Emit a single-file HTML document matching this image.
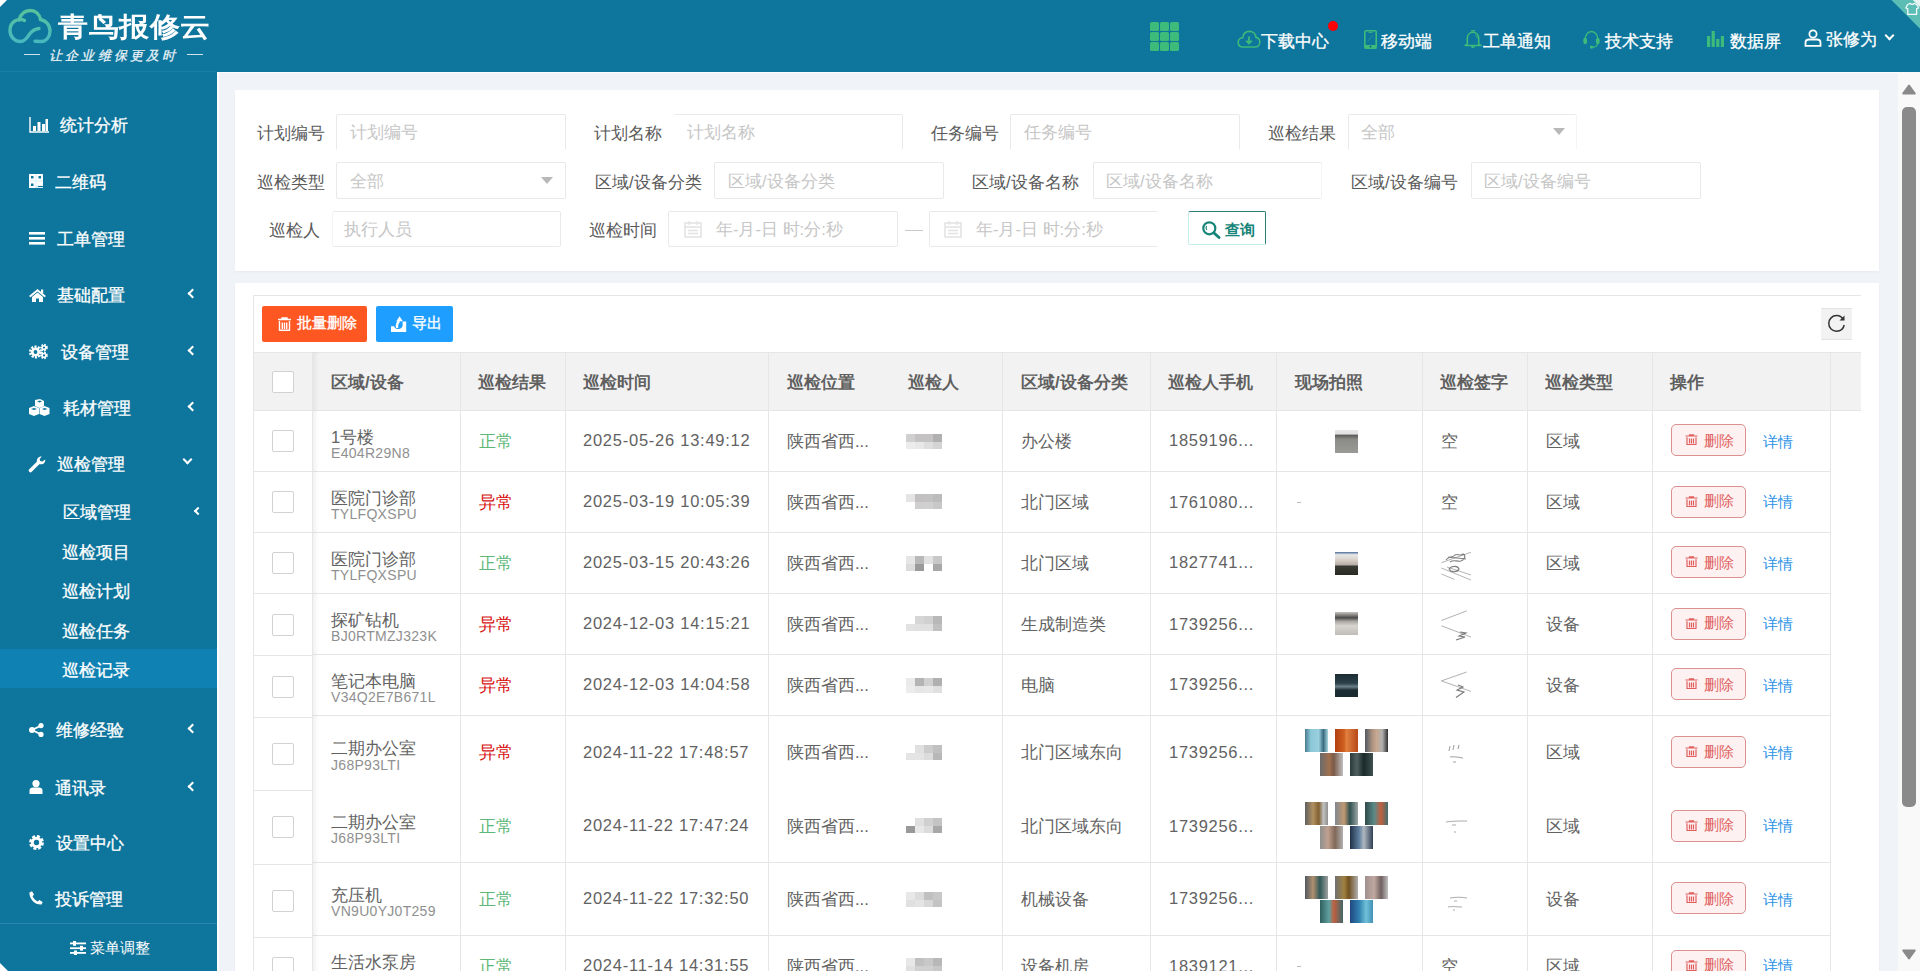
<!DOCTYPE html><html><head><meta charset="utf-8"><title>巡检记录</title><style>
*{margin:0;padding:0;box-sizing:border-box}
html,body{width:1920px;height:971px;overflow:hidden}
body{position:relative;background:#f0f3f8;font-family:"Liberation Sans",sans-serif;color:#666}
.a{position:absolute}
.t{position:absolute;white-space:nowrap;line-height:1}
svg{position:absolute;overflow:visible}
#hdr{left:0;top:0;width:1920px;height:72px;background:#0e759c}
#side{left:0;top:72px;width:217px;height:899px;background:#0e759c}
.nav{color:#fff;font-size:17px;-webkit-text-stroke:0.3px #fff}
.sm{color:#fff;font-size:17px;-webkit-text-stroke:0.3px #fff}
.chev{position:absolute;width:7px;height:7px;border-left:2px solid #fff;border-bottom:2px solid #fff}
.card{position:absolute;background:#fff;box-shadow:0 1px 2px rgba(0,0,0,.04)}
.lbl{font-size:16.5px;color:#5a5a5a}
.inp{position:absolute;border:1px solid #e9e9e9;border-radius:2px;background:#fff}
.ph{font-size:16.5px;color:#c6c6c6}
.th{font-size:16.5px;color:#5f5f5f;font-weight:bold}
.td{font-size:16.5px;color:#626262}
.code{font-size:14px;color:#909090;letter-spacing:0.3px}
.ok{color:#5fb878}
.bad{color:#d70f0f}
.vl{position:absolute;width:1px;background:#e6e6e6}
.hl{position:absolute;height:1px;background:#e6e6e6}
.cb{position:absolute;width:22px;height:22px;border:1px solid #d2d2d2;border-radius:2px;background:#fff}
.del{position:absolute;width:75px;height:32px;border:1px solid #dc9090;border-radius:5px;background:#fdf1f1}
.delt{font-size:14.5px;color:#e06060}
.det{font-size:15px;color:#2a92e6}
.thumb{position:absolute;width:23px;height:23px}
</style></head><body>
<div id="hdr" class="a"></div>
<div id="side" class="a"></div>
<div class="a" style="left:0;top:71px;width:217px;height:1px;background:#1b7ea6"></div>
<div class="a" style="left:217px;top:72px;width:1681px;height:899px;border-left:2px solid #fbfdff;border-top:1px solid #fbfdff"></div>
<div class="a" style="left:0;top:0;width:0;height:0;border-top:7px solid #fff;border-right:7px solid transparent"></div>
<svg style="left:4px;top:4px" width="52" height="44" viewBox="0 0 52 44">
<defs><linearGradient id="cg" x1="0" y1="0" x2="0" y2="1"><stop offset="0" stop-color="#58c39c"/><stop offset="1" stop-color="#48b8bf"/></linearGradient></defs>
<path d="M20.5 16.5 C15 13.5 6 17 6 26.5 C6 33 11 37.5 16.5 37.5 C22 37.5 24 32 26 29.5 C28 27 31 25 35 24.5 M15 16 C17 9 21.5 6.5 26.5 6.5 C31.5 6.5 35.5 10 36.5 15.5 C42 16.5 46 21 46 27 C46 33 42 37.5 37.5 37.5 L31 37.2" fill="none" stroke="url(#cg)" stroke-width="3.4" stroke-linecap="round"/>
</svg>
<div class="t" style="left:58px;top:12.5px;font-size:30px;color:#fff;font-weight:bold;transform:scaleY(0.9);transform-origin:0 0;letter-spacing:0.6px">青鸟报修云</div>
<div class="a" style="left:24px;top:54px;width:16px;height:1px;background:#cfe3ee"></div>
<div class="a" style="left:187px;top:54px;width:16px;height:1px;background:#cfe3ee"></div>
<div class="t" style="left:49px;top:48.5px;font-size:13px;color:#e8f2f7;letter-spacing:3.2px;-webkit-text-stroke:0.3px #e8f2f7;font-family:'Liberation Serif',serif;font-style:italic">让企业维保更及时</div>
<svg style="left:1150px;top:22px" width="29" height="29"><rect x="0" y="0" width="9" height="9" rx="1.5" fill="#3dbb7a"/><rect x="10" y="0" width="9" height="9" rx="1.5" fill="#3dbb7a"/><rect x="20" y="0" width="9" height="9" rx="1.5" fill="#3dbb7a"/><rect x="0" y="10" width="9" height="9" rx="1.5" fill="#3dbb7a"/><rect x="10" y="10" width="9" height="9" rx="1.5" fill="#3dbb7a"/><rect x="20" y="10" width="9" height="9" rx="1.5" fill="#3dbb7a"/><rect x="0" y="20" width="9" height="9" rx="1.5" fill="#3dbb7a"/><rect x="10" y="20" width="9" height="9" rx="1.5" fill="#3dbb7a"/><rect x="20" y="20" width="9" height="9" rx="1.5" fill="#3dbb7a"/></svg>
<svg style="left:1237px;top:30px" width="24" height="19" viewBox="0 0 24 19">
<path d="M6 17 C3 17 1.2 15 1.2 12.3 C1.2 9.6 3.2 7.8 5.6 7.8 C6.2 3.9 8.8 1.4 12.4 1.4 C16 1.4 18.6 4 19 7.4 C21.3 7.8 22.8 9.7 22.8 12.2 C22.8 15 20.8 17 18 17 Z" fill="none" stroke="#3dbb7a" stroke-width="1.6"/>
<path d="M12 6.5 V13.2 M9.2 10.6 L12 13.4 L14.8 10.6" fill="none" stroke="#3dbb7a" stroke-width="1.8"/>
</svg>
<div class="t nav" style="left:1261px;top:33px">下载中心</div>
<div class="a" style="left:1328px;top:21px;width:10px;height:10px;border-radius:50%;background:#f00"></div>
<svg style="left:1364px;top:30px" width="13" height="19" viewBox="0 0 13 19">
<path d="M2 0.8 H11 C11.7 0.8 12.2 1.3 12.2 2 V17 C12.2 17.7 11.7 18.2 11 18.2 H2 C1.3 18.2 0.8 17.7 0.8 17 V2 C0.8 1.3 1.3 0.8 2 0.8 Z" fill="none" stroke="#3dbb7a" stroke-width="1.6"/>
<rect x="0.8" y="15" width="11.4" height="3.2" fill="#3dbb7a"/>
<circle cx="6.5" cy="16.6" r="0.9" fill="#0e5a70"/>
<path d="M4.5 2.3 H8.5" stroke="#3dbb7a" stroke-width="1"/>
<path d="M4 11 L9 5" stroke="#3dbb7a" stroke-width="0.8" opacity=".55"/>
</svg>
<div class="t nav" style="left:1381px;top:33px">移动端</div>
<svg style="left:1464px;top:30px" width="18" height="18" viewBox="0 0 18 18">
<path d="M7 0.8 H11" stroke="#3dbb7a" stroke-width="1.4"/>
<path d="M3.3 14.5 V8.5 C3.3 4.8 5.8 2.2 9 2.2 C12.2 2.2 14.7 4.8 14.7 8.5 V14.5 C15.5 14.8 16.5 15 17 15.5 H1 C1.5 15 2.5 14.8 3.3 14.5 Z" fill="none" stroke="#3dbb7a" stroke-width="1.6" stroke-linejoin="round"/>
<path d="M11 4.5 C12.5 5.3 13.2 6.8 13.2 8.3" fill="none" stroke="#3dbb7a" stroke-width="1"/>
<path d="M7.3 16.3 C7.6 17.6 10.4 17.6 10.7 16.3" fill="#3dbb7a" stroke="#3dbb7a" stroke-width="1.2"/>
</svg>
<div class="t nav" style="left:1483px;top:33px">工单通知</div>
<svg style="left:1583px;top:29.5px" width="17" height="19" viewBox="0 0 17 19">
<path d="M2 10 C2 5 5 1.5 8.5 1.5 C12 1.5 15 5 15 10" fill="none" stroke="#3dbb7a" stroke-width="1.4"/>
<ellipse cx="2.2" cy="11" rx="1.9" ry="3.2" fill="#3dbb7a"/><ellipse cx="14.8" cy="11" rx="1.9" ry="3.2" fill="#3dbb7a"/>
<path d="M14.8 13 C14.5 16 12 17.3 9 17.3" fill="none" stroke="#3dbb7a" stroke-width="1.2"/>
<circle cx="8.6" cy="17.1" r="1.7" fill="#3dbb7a"/>
</svg>
<div class="t nav" style="left:1605px;top:33px">技术支持</div>
<svg style="left:1707px;top:31px" width="18" height="17" viewBox="0 0 18 17">
<rect x="0" y="5" width="3.2" height="11" fill="#3dbb7a"/><rect x="4.6" y="0" width="3.2" height="16" fill="#3dbb7a"/><rect x="9.2" y="8" width="3.2" height="8" fill="#3dbb7a"/><rect x="13.8" y="5" width="3.2" height="11" fill="#3dbb7a"/>
</svg>
<div class="t nav" style="left:1730px;top:33px">数据屏</div>
<svg style="left:1804px;top:29px" width="18" height="18" viewBox="0 0 18 18">
<circle cx="9" cy="5" r="3.6" fill="none" stroke="#fff" stroke-width="1.8"/>
<path d="M1.5 16.8 V13.5 C1.5 11.5 3 10.5 5 10.5 H13 C15 10.5 16.5 11.5 16.5 13.5 V16.8 Z" fill="none" stroke="#fff" stroke-width="1.8"/>
</svg>
<div class="t nav" style="left:1826px;top:30.5px">张修为</div>
<div class="chev" style="left:1886px;top:32px;transform:rotate(-45deg);width:7px;height:7px"></div>
<svg style="left:1878px;top:0" width="42" height="42" viewBox="0 0 42 42">
<path d="M13.4 0 H42 V28.8 Z" fill="#5bbdb4"/>
<path d="M34.8 0 H42 V7 Z" fill="#e6f4f2"/>
<path d="M29.5 4.8 L32.2 3.3 C33.2 4.6 35.2 4.6 36.2 3.3 L38.9 4.8 L40.5 7.8 L38.6 8.8 V14.4 H29.8 V8.8 L27.9 7.8 Z" fill="none" stroke="#f4fbfb" stroke-width="1.3" stroke-linejoin="round"/>
</svg>
<div class="a" style="left:0;top:649px;width:217px;height:39px;background:#0f82b3"></div>
<svg style="left:29px;top:117px" width="21" height="16" viewBox="0 0 21 16"><path d="M1 0 V15 H20" fill="none" stroke="#fff" stroke-width="1.4"/><rect x="4" y="9" width="3" height="5" fill="#fff"/><rect x="8.5" y="5" width="3" height="9" fill="#fff"/><rect x="13" y="7" width="3" height="7" fill="#fff"/><rect x="16.5" y="2" width="2.5" height="12" fill="#fff"/></svg>
<div class="t sm" style="left:60px;top:117px">统计分析</div>
<svg style="left:29px;top:174px" width="14" height="14" viewBox="0 0 14 14"><rect width="14" height="14" fill="#d8eef6"/><path d="M0 0h6.5v6.5h-6.5z M7.5 0h6.5v6.5h-6.5z M0 7.5h6.5v6.5h-6.5z M7.5 7.5h6.5v4h-6.5z" fill="#fff"/><path d="M2 2h2.5v2.5h-2.5z M9.5 2h2.5v2.5h-2.5z M2 9.5h2.5v2.5h-2.5z M9 12h5v1h-5z" fill="#0e759c"/></svg>
<div class="t sm" style="left:55px;top:174px">二维码</div>
<svg style="left:29px;top:232px" width="16" height="13" viewBox="0 0 16 13"><rect y="0" width="16" height="2.6" fill="#fff"/><rect y="5" width="16" height="2.6" fill="#fff"/><rect y="10" width="16" height="2.6" fill="#fff"/></svg>
<div class="t sm" style="left:57px;top:231px">工单管理</div>
<svg style="left:29px;top:289px" width="17" height="13" viewBox="0 0 17 13"><path d="M8.5 0 L17 7 L15.5 8.3 L8.5 2.6 L1.5 8.3 L0 7 Z" fill="#fff"/><path d="M3 8 L8.5 3.6 L14 8 V13 H10 V9.5 H7 V13 H3 Z" fill="#fff"/><rect x="12" y="0.5" width="2.2" height="4" fill="#fff"/></svg>
<div class="t sm" style="left:57px;top:287px">基础配置</div>
<div class="chev" style="left:189px;top:290px;transform:rotate(45deg);width:7px;height:7px"></div>
<svg style="left:29px;top:344px" width="19" height="15" viewBox="0 0 19 15"><circle cx="6.5" cy="8" r="5.2" fill="none" stroke="#fff" stroke-width="2.6" stroke-dasharray="2 1.27"/><circle cx="6.5" cy="8" r="3.2" fill="none" stroke="#fff" stroke-width="2.6"/><circle cx="15" cy="3.6" r="2.8" fill="none" stroke="#fff" stroke-width="2" stroke-dasharray="1.5 1.1"/><circle cx="15" cy="3.6" r="1.9" fill="none" stroke="#fff" stroke-width="1.6"/><circle cx="15" cy="11.4" r="2.8" fill="none" stroke="#fff" stroke-width="2" stroke-dasharray="1.5 1.1"/><circle cx="15" cy="11.4" r="1.9" fill="none" stroke="#fff" stroke-width="1.6"/></svg>
<div class="t sm" style="left:61px;top:344px">设备管理</div>
<div class="chev" style="left:189px;top:347px;transform:rotate(45deg);width:7px;height:7px"></div>
<svg style="left:29px;top:399px" width="21" height="17" viewBox="0 0 21 17"><path d="M6 1 L11 0 L15 2 V7 L10.5 9 L6 7 Z" fill="#fff"/><path d="M0 9 L5 7 L10 9 V15 L5 17 L0 15 Z" fill="#fff"/><path d="M10.5 9 L15.5 7 L20.5 9 V15 L15.5 17 L10.5 15 Z" fill="#fff"/><path d="M2 10 L5 9 L8 10 L5 11 Z M13 10 L15.5 9 L18.5 10 L15.5 11 Z M8 2.5 L11 1.5 L13 2.5 L10.5 3.5 Z" fill="#0e759c"/></svg>
<div class="t sm" style="left:63px;top:400px">耗材管理</div>
<div class="chev" style="left:189px;top:403px;transform:rotate(45deg);width:7px;height:7px"></div>
<svg style="left:29px;top:456px" width="17" height="16" viewBox="0 0 17 16"><path d="M1.5 14.5 L9 7" stroke="#fff" stroke-width="3.6" stroke-linecap="round"/><path d="M8 6 C7.3 3 9.5 0.3 12.8 0.6 L10.6 3 L11.2 5 L13.4 5.6 L16.2 3.4 C16.6 6.8 13.8 9 10.8 8.2 Z" fill="#fff"/></svg>
<div class="t sm" style="left:57px;top:456px">巡检管理</div>
<div class="chev" style="left:184px;top:456px;transform:rotate(-45deg);width:7px;height:7px"></div>
<svg style="left:29px;top:723px" width="15" height="14" viewBox="0 0 15 14"><circle cx="12" cy="2.6" r="2.6" fill="#fff"/><circle cx="3" cy="7" r="3" fill="#fff"/><circle cx="12" cy="11.4" r="2.6" fill="#fff"/><path d="M3 7 L12 2.6 M3 7 L12 11.4" stroke="#fff" stroke-width="1.8"/></svg>
<div class="t sm" style="left:56px;top:722px">维修经验</div>
<div class="chev" style="left:189px;top:725px;transform:rotate(45deg);width:7px;height:7px"></div>
<svg style="left:29px;top:780px" width="14" height="14" viewBox="0 0 14 14"><circle cx="7" cy="3.6" r="3.6" fill="#fff"/><path d="M0.5 14 V10.5 C0.5 8.7 2 7.6 4 7.6 H10 C12 7.6 13.5 8.7 13.5 10.5 V14 Z" fill="#fff"/></svg>
<div class="t sm" style="left:55px;top:780px">通讯录</div>
<div class="chev" style="left:189px;top:783px;transform:rotate(45deg);width:7px;height:7px"></div>
<svg style="left:29px;top:835px" width="15" height="15" viewBox="0 0 15 15"><circle cx="7.5" cy="7.5" r="5.4" fill="none" stroke="#fff" stroke-width="4" stroke-dasharray="2.6 1.6"/><circle cx="7.5" cy="7.5" r="4.2" fill="none" stroke="#fff" stroke-width="3"/></svg>
<div class="t sm" style="left:56px;top:835px">设置中心</div>
<svg style="left:29px;top:891px" width="14" height="14" viewBox="0 0 14 14"><path d="M3 0.3 L5 3.5 L3.6 5.2 C4.4 7.2 6.5 9.4 8.6 10.4 L10.3 9 L13.7 11 L12.6 13.5 C6 14 0.2 8 0.4 1.4 Z" fill="#fff"/></svg>
<div class="t sm" style="left:55px;top:891px">投诉管理</div>
<div class="t sm" style="left:63px;top:504px">区域管理</div>
<div class="chev" style="left:195px;top:508px;transform:rotate(45deg);width:6px;height:6px"></div>
<div class="t sm" style="left:62px;top:544px">巡检项目</div>
<div class="t sm" style="left:62px;top:583px">巡检计划</div>
<div class="t sm" style="left:62px;top:623px">巡检任务</div>
<div class="t sm" style="left:62px;top:662px">巡检记录</div>
<div class="a" style="left:0;top:923px;width:217px;height:1px;background:#2a86ad"></div>
<svg style="left:70px;top:941px" width="16" height="14" viewBox="0 0 16 14"><rect y="1.5" width="16" height="1.8" fill="#fff"/><rect y="6.3" width="16" height="1.8" fill="#fff"/><rect y="11" width="16" height="1.8" fill="#fff"/><rect x="3" y="0" width="3" height="4.8" fill="#fff"/><rect x="10" y="4.8" width="3" height="4.8" fill="#fff"/><rect x="4" y="9.5" width="3" height="4.5" fill="#fff"/></svg>
<div class="t" style="left:90px;top:940px;font-size:15px;color:#fff">菜单调整</div>
<div class="a" style="left:0;top:963px;width:0;height:0;border-left:8px solid #fff;border-top:8px solid transparent"></div>
<div class="a" style="left:1898px;top:72px;width:22px;height:899px;background:#f9f9f9"></div>
<svg style="left:1902px;top:84px" width="14" height="11" viewBox="0 0 14 11"><path d="M7 1.5 L12.8 9.5 H1.2 Z" fill="#8a8a8a" stroke="#8a8a8a" stroke-width="2" stroke-linejoin="round"/></svg>
<div class="a" style="left:1902px;top:107px;width:14px;height:700px;background:#8a8a8a;border-radius:5px"></div>
<svg style="left:1902px;top:949px" width="14" height="11" viewBox="0 0 14 11"><path d="M7 9.5 L12.8 1.5 H1.2 Z" fill="#8a8a8a" stroke="#8a8a8a" stroke-width="2" stroke-linejoin="round"/></svg>
<div class="card" style="left:235px;top:90px;width:1644px;height:181px"></div>
<div class="t lbl" style="left:257px;top:125px">计划编号</div>
<div class="inp" style="left:336px;top:114px;width:230px;height:36px;border-bottom-color:transparent"></div>
<div class="t ph" style="left:350px;top:124px">计划编号</div>
<div class="t lbl" style="left:594px;top:125px">计划名称</div>
<div class="inp" style="left:674px;top:114px;width:229px;height:36px;border-bottom-color:transparent;border-left-color:transparent"></div>
<div class="t ph" style="left:687px;top:124px">计划名称</div>
<div class="t lbl" style="left:931px;top:125px">任务编号</div>
<div class="inp" style="left:1010px;top:114px;width:230px;height:36px;border-bottom-color:transparent"></div>
<div class="t ph" style="left:1024px;top:124px">任务编号</div>
<div class="t lbl" style="left:1268px;top:125px">巡检结果</div>
<div class="inp" style="left:1348px;top:114px;width:229px;height:36px;border-bottom-color:transparent;border-right-color:#f4f4f4"></div>
<div class="t ph" style="left:1361px;top:124px">全部</div>
<div class="a" style="left:1553px;top:128px;width:0;height:0;border-left:6px solid transparent;border-right:6px solid transparent;border-top:7px solid #b8b8b8"></div>
<div class="t lbl" style="left:257px;top:174px">巡检类型</div>
<div class="inp" style="left:336px;top:162px;width:230px;height:37px;"></div>
<div class="t ph" style="left:350px;top:173px">全部</div>
<div class="a" style="left:541px;top:177px;width:0;height:0;border-left:6px solid transparent;border-right:6px solid transparent;border-top:7px solid #b8b8b8"></div>
<div class="t lbl" style="left:595px;top:174px">区域/设备分类</div>
<div class="inp" style="left:714px;top:162px;width:230px;height:37px;"></div>
<div class="t ph" style="left:728px;top:173px">区域/设备分类</div>
<div class="t lbl" style="left:972px;top:174px">区域/设备名称</div>
<div class="inp" style="left:1093px;top:162px;width:229px;height:37px;border-right-color:#f4f4f4"></div>
<div class="t ph" style="left:1106px;top:173px">区域/设备名称</div>
<div class="t lbl" style="left:1351px;top:174px">区域/设备编号</div>
<div class="inp" style="left:1471px;top:162px;width:230px;height:37px;"></div>
<div class="t ph" style="left:1484px;top:173px">区域/设备编号</div>
<div class="t lbl" style="left:269px;top:222px">巡检人</div>
<div class="inp" style="left:332px;top:211px;width:229px;height:36px;border-left-color:#f4f4f4"></div>
<div class="t ph" style="left:344px;top:221px">执行人员</div>
<div class="t lbl" style="left:589px;top:222px">巡检时间</div>
<div class="inp" style="left:668px;top:211px;width:230px;height:36px;"></div>
<svg style="left:684px;top:220px" width="18" height="18" viewBox="0 0 18 18"><rect x="1" y="3" width="16" height="14" fill="none" stroke="#e2e2e2" stroke-width="1.5"/><path d="M1 7 H17 M5 1 V5 M13 1 V5 M4 10.5 H14 M4 13.5 H14" stroke="#e2e2e2" stroke-width="1.3"/></svg>
<div class="t ph" style="left:716px;top:221px">年-月-日 时:分:秒</div>
<div class="a" style="left:905px;top:230px;width:18px;height:1px;background:#c8c8c8"></div>
<div class="inp" style="left:929px;top:211px;width:229px;height:36px;border-right-color:transparent"></div>
<svg style="left:944px;top:220px" width="18" height="18" viewBox="0 0 18 18"><rect x="1" y="3" width="16" height="14" fill="none" stroke="#e2e2e2" stroke-width="1.5"/><path d="M1 7 H17 M5 1 V5 M13 1 V5 M4 10.5 H14 M4 13.5 H14" stroke="#e2e2e2" stroke-width="1.3"/></svg>
<div class="t ph" style="left:976px;top:221px">年-月-日 时:分:秒</div>
<div class="a" style="left:1188px;top:211px;width:78px;height:34px;border:1px solid #2a7d72;border-left-color:#c4eeee;border-bottom-color:#c4eeee;border-radius:2px;background:#fff"></div>
<svg style="left:1202px;top:221px" width="19" height="19" viewBox="0 0 19 19"><circle cx="7.3" cy="7.3" r="6" fill="none" stroke="#168478" stroke-width="2.2"/><path d="M4.5 5 C4 6 4 8 4.8 9" fill="none" stroke="#168478" stroke-width="1.2"/><path d="M12 12 L17 16.5" stroke="#168478" stroke-width="3" stroke-linecap="round"/></svg>
<div class="t" style="left:1224.5px;top:221.5px;font-size:15px;color:#168478;font-weight:bold">查询</div>
<div class="card" style="left:235px;top:283px;width:1644px;height:700px"></div>
<div class="a" style="left:253px;top:295px;width:1608px;height:700px;border:1px solid #e6e6e6;border-bottom:none;border-right:none"></div>
<div class="a" style="left:262px;top:306px;width:105px;height:36px;background:#ff5722;border-radius:2px"></div>
<svg style="left:277px;top:317px" width="15" height="14" viewBox="0 0 15 14"><path d="M1 2.5 H14 M5 2.5 V1 H10 V2.5 M2.5 4 V13.3 H12.5 V4 M5.3 5.5 V12 M7.5 5.5 V12 M9.7 5.5 V12" fill="none" stroke="#fff" stroke-width="1.4"/></svg>
<div class="t" style="left:297px;top:316px;font-size:14.5px;color:#fff;-webkit-text-stroke:0.35px #fff">批量删除</div>
<div class="a" style="left:376px;top:306px;width:77px;height:36px;background:#1e9fff;border-radius:2px"></div>
<svg style="left:391px;top:316px" width="16" height="16" viewBox="0 0 16 16"><path d="M0 10.2 H3.2 C3.6 12.2 5.2 13 7.4 13 C9.8 13 11.2 11.8 11.6 9.8 V5.6 H15.2 V16 H0 Z" fill="#fff"/><path d="M6.2 12 C5.6 9.5 6.2 7 8.2 5.2" fill="none" stroke="#fff" stroke-width="2.4"/><path d="M5.2 5.6 L8.6 0.2 L11.8 5.2 Z" fill="#fff"/></svg>
<div class="t" style="left:412px;top:316px;font-size:14.5px;color:#fff;-webkit-text-stroke:0.35px #fff">导出</div>
<div class="a" style="left:1821px;top:308px;width:31px;height:32px;background:#f2f2f2;border:1px solid #e2e2e2;border-left-color:#f2f2f2;border-right-color:#f2f2f2"></div>
<svg style="left:1827px;top:314px" width="20" height="19" viewBox="0 0 20 19"><path d="M16.5 6 C15 3 12.5 1.6 9.6 1.6 C5.2 1.6 1.8 5 1.8 9.4 C1.8 13.8 5.2 17.2 9.6 17.2 C13.4 17.2 16.4 14.6 17.2 11" fill="none" stroke="#333" stroke-width="1.5"/><path d="M12.5 6.5 H17.5 V1.5 Z" fill="#333"/></svg>
<div class="a" style="left:254px;top:352px;width:1607px;height:58px;background:#f2f2f2"></div>
<div class="hl" style="left:254px;top:352px;width:1607px"></div>
<div class="t th" style="left:331px;top:374px">区域/设备</div>
<div class="t th" style="left:478px;top:374px">巡检结果</div>
<div class="t th" style="left:583px;top:374px">巡检时间</div>
<div class="t th" style="left:787px;top:374px">巡检位置</div>
<div class="t th" style="left:908px;top:374px">巡检人</div>
<div class="t th" style="left:1021px;top:374px">区域/设备分类</div>
<div class="t th" style="left:1168px;top:374px">巡检人手机</div>
<div class="t th" style="left:1295px;top:374px">现场拍照</div>
<div class="t th" style="left:1440px;top:374px">巡检签字</div>
<div class="t th" style="left:1545px;top:374px">巡检类型</div>
<div class="t th" style="left:1670px;top:374px">操作</div>
<div class="hl" style="left:254px;top:410px;width:1607px"></div>
<div class="t td" style="left:331px;top:428.5px">1号楼</div>
<div class="t code" style="left:331px;top:446.0px">E404R29N8</div>
<div class="t td ok" style="left:479px;top:432.5px">正常</div>
<div class="t td" style="left:583px;top:432.0px;letter-spacing:0.75px">2025-05-26 13:49:12</div>
<div class="t td" style="left:787px;top:432.5px">陕西省西...</div>
<div class="a" style="left:906px;top:434px;width:36px;height:15px;filter:blur(0.7px)"><div class="a" style="left:0px;top:0px;width:9px;height:8px;background:#d0d0d0"></div><div class="a" style="left:9px;top:0px;width:9px;height:8px;background:#c4c2c2"></div><div class="a" style="left:18px;top:0px;width:9px;height:8px;background:#c4c2c2"></div><div class="a" style="left:27px;top:0px;width:9px;height:8px;background:#b0b0b0"></div><div class="a" style="left:0px;top:8px;width:9px;height:7px;background:#ececec"></div><div class="a" style="left:9px;top:8px;width:9px;height:7px;background:#e8e8e8"></div><div class="a" style="left:18px;top:8px;width:9px;height:7px;background:#dedede"></div><div class="a" style="left:27px;top:8px;width:9px;height:7px;background:#d4d4d4"></div></div>
<div class="t td" style="left:1021px;top:432.5px">办公楼</div>
<div class="t td" style="left:1169px;top:432px;letter-spacing:0.7px">1859196...</div>
<div class="thumb" style="left:1335px;top:430px;background:linear-gradient(180deg,#e8e8e8 0,#e0e0e0 18%,#5a5a58 22%,#8a8a86 40%,#9a9a96 100%)"></div>
<div class="t td" style="left:1441px;top:432.5px">空</div>
<div class="t td" style="left:1546px;top:432.5px">区域</div>
<div class="del" style="left:1671px;top:424px"></div>
<svg style="left:1685px;top:434px" width="13" height="11" viewBox="0 0 13 11"><path d="M0.5 2 H12.5 M4.5 2 V0.8 H8.5 V2 M2 3.3 V10.5 H11 V3.3 M4.5 4.5 V9.5 M6.5 4.5 V9.5 M8.5 4.5 V9.5" fill="none" stroke="#e06060" stroke-width="1.2"/></svg>
<div class="t delt" style="left:1704px;top:434px">删除</div>
<div class="t det" style="left:1763px;top:434px">详情</div>
<div class="cb" style="left:272px;top:430px"></div>
<div class="hl" style="left:312px;top:471px;width:1518px"></div>
<div class="t td" style="left:331px;top:489.5px">医院门诊部</div>
<div class="t code" style="left:331px;top:507.0px">TYLFQXSPU</div>
<div class="t td bad" style="left:479px;top:493.5px">异常</div>
<div class="t td" style="left:583px;top:493.0px;letter-spacing:0.75px">2025-03-19 10:05:39</div>
<div class="t td" style="left:787px;top:493.5px">陕西省西...</div>
<div class="a" style="left:906px;top:494px;width:36px;height:15px;filter:blur(0.7px)"><div class="a" style="left:0px;top:0px;width:9px;height:8px;background:#e4e4e4"></div><div class="a" style="left:9px;top:0px;width:9px;height:8px;background:#c2c0c0"></div><div class="a" style="left:18px;top:0px;width:9px;height:8px;background:#c2c2c2"></div><div class="a" style="left:27px;top:0px;width:9px;height:8px;background:#bcbcbc"></div><div class="a" style="left:9px;top:8px;width:9px;height:7px;background:#cfcfcf"></div><div class="a" style="left:18px;top:8px;width:9px;height:7px;background:#d0d0d0"></div><div class="a" style="left:27px;top:8px;width:9px;height:7px;background:#c8c8c8"></div></div>
<div class="t td" style="left:1021px;top:493.5px">北门区域</div>
<div class="t td" style="left:1169px;top:494px;letter-spacing:0.7px">1761080...</div>
<div class="a" style="left:1297px;top:502px;width:4px;height:1px;background:#bbb"></div>
<div class="t td" style="left:1441px;top:493.5px">空</div>
<div class="t td" style="left:1546px;top:493.5px">区域</div>
<div class="del" style="left:1671px;top:486px"></div>
<svg style="left:1685px;top:496px" width="13" height="11" viewBox="0 0 13 11"><path d="M0.5 2 H12.5 M4.5 2 V0.8 H8.5 V2 M2 3.3 V10.5 H11 V3.3 M4.5 4.5 V9.5 M6.5 4.5 V9.5 M8.5 4.5 V9.5" fill="none" stroke="#e06060" stroke-width="1.2"/></svg>
<div class="t delt" style="left:1704px;top:494px">删除</div>
<div class="t det" style="left:1763px;top:494px">详情</div>
<div class="cb" style="left:272px;top:491px"></div>
<div class="hl" style="left:312px;top:532px;width:1518px"></div>
<div class="t td" style="left:331px;top:550.5px">医院门诊部</div>
<div class="t code" style="left:331px;top:568.0px">TYLFQXSPU</div>
<div class="t td ok" style="left:479px;top:554.5px">正常</div>
<div class="t td" style="left:583px;top:554.0px;letter-spacing:0.75px">2025-03-15 20:43:26</div>
<div class="t td" style="left:787px;top:554.5px">陕西省西...</div>
<div class="a" style="left:906px;top:556px;width:36px;height:15px;filter:blur(0.7px)"><div class="a" style="left:0px;top:0px;width:9px;height:8px;background:#e6e6e6"></div><div class="a" style="left:9px;top:0px;width:9px;height:8px;background:#b8b8b8"></div><div class="a" style="left:18px;top:0px;width:9px;height:8px;background:#e2e2e2"></div><div class="a" style="left:27px;top:0px;width:9px;height:8px;background:#c8c8c8"></div><div class="a" style="left:0px;top:8px;width:9px;height:7px;background:#dcdcdc"></div><div class="a" style="left:9px;top:8px;width:9px;height:7px;background:#9a9a9a"></div><div class="a" style="left:27px;top:8px;width:9px;height:7px;background:#a8a8a8"></div></div>
<div class="t td" style="left:1021px;top:554.5px">北门区域</div>
<div class="t td" style="left:1169px;top:554px;letter-spacing:0.7px">1827741...</div>
<div class="thumb" style="left:1335px;top:552px;background:linear-gradient(180deg,#4a6a9a 0,#e8e8e8 12%,#d8d0c8 35%,#b8b0a8 55%,#3a3a34 62%,#2a2a24 100%)"></div>
<svg style="left:1430px;top:532px" width="60" height="61" viewBox="0 0 60 61"><path d="M11.4 30.7 L41 20.2 M11.4 36 L41 48 M11.4 42 L24.5 47.4 M17 35 L41 43" fill="none" stroke="#888" stroke-width="0.9" opacity=".7"/><path d="M16 28 C19 24 23 26 25 23 C27 21 30 25 33 22 C36 23 35 28 31 29 C27 30 24 27 20 30 M18 25 L36 27 M19 37 C22 33 28 34 29 37 C28 40 21 41 19 37 Z" fill="none" stroke="#555" stroke-width="1.1" opacity=".75"/></svg>
<div class="t td" style="left:1546px;top:554.5px">区域</div>
<div class="del" style="left:1671px;top:546px"></div>
<svg style="left:1685px;top:556px" width="13" height="11" viewBox="0 0 13 11"><path d="M0.5 2 H12.5 M4.5 2 V0.8 H8.5 V2 M2 3.3 V10.5 H11 V3.3 M4.5 4.5 V9.5 M6.5 4.5 V9.5 M8.5 4.5 V9.5" fill="none" stroke="#e06060" stroke-width="1.2"/></svg>
<div class="t delt" style="left:1704px;top:556px">删除</div>
<div class="t det" style="left:1763px;top:556px">详情</div>
<div class="cb" style="left:272px;top:552px"></div>
<div class="hl" style="left:312px;top:593px;width:1518px"></div>
<div class="t td" style="left:331px;top:611.5px">探矿钻机</div>
<div class="t code" style="left:331px;top:629.0px">BJ0RTMZJ323K</div>
<div class="t td bad" style="left:479px;top:615.5px">异常</div>
<div class="t td" style="left:583px;top:615.0px;letter-spacing:0.75px">2024-12-03 14:15:21</div>
<div class="t td" style="left:787px;top:615.5px">陕西省西...</div>
<div class="a" style="left:906px;top:616px;width:36px;height:15px;filter:blur(0.7px)"><div class="a" style="left:9px;top:0px;width:9px;height:8px;background:#d6d6d6"></div><div class="a" style="left:18px;top:0px;width:9px;height:8px;background:#d0d0d0"></div><div class="a" style="left:27px;top:0px;width:9px;height:8px;background:#b8b8b8"></div><div class="a" style="left:0px;top:8px;width:9px;height:7px;background:#e2e2e2"></div><div class="a" style="left:9px;top:8px;width:9px;height:7px;background:#e0e0e0"></div><div class="a" style="left:18px;top:8px;width:9px;height:7px;background:#e0e0e0"></div><div class="a" style="left:27px;top:8px;width:9px;height:7px;background:#c0c0c0"></div></div>
<div class="t td" style="left:1021px;top:615.5px">生成制造类</div>
<div class="t td" style="left:1169px;top:616px;letter-spacing:0.7px">1739256...</div>
<div class="thumb" style="left:1335px;top:612px;background:linear-gradient(180deg,#c8c4c0 0,#4a4a48 25%,#a8a4a0 40%,#d8d4d0 60%,#c0bcb8 100%)"></div>
<svg style="left:1430px;top:593px" width="60" height="61" viewBox="0 0 60 61"><path d="M11.4 27.5 L36.7 17.9 M11.4 32.8 L41 44" fill="none" stroke="#8a8a8a" stroke-width="0.9" opacity=".75"/><path d="M30 39 L36 40 L29 43 L35 44 L26 47" fill="none" stroke="#555" stroke-width="1.1" opacity=".8"/></svg>
<div class="t td" style="left:1546px;top:615.5px">设备</div>
<div class="del" style="left:1671px;top:608px"></div>
<svg style="left:1685px;top:618px" width="13" height="11" viewBox="0 0 13 11"><path d="M0.5 2 H12.5 M4.5 2 V0.8 H8.5 V2 M2 3.3 V10.5 H11 V3.3 M4.5 4.5 V9.5 M6.5 4.5 V9.5 M8.5 4.5 V9.5" fill="none" stroke="#e06060" stroke-width="1.2"/></svg>
<div class="t delt" style="left:1704px;top:616px">删除</div>
<div class="t det" style="left:1763px;top:616px">详情</div>
<div class="cb" style="left:272px;top:614px"></div>
<div class="hl" style="left:312px;top:654px;width:1518px"></div>
<div class="t td" style="left:331px;top:672.5px">笔记本电脑</div>
<div class="t code" style="left:331px;top:690.0px">V34Q2E7B671L</div>
<div class="t td bad" style="left:479px;top:676.5px">异常</div>
<div class="t td" style="left:583px;top:676.0px;letter-spacing:0.75px">2024-12-03 14:04:58</div>
<div class="t td" style="left:787px;top:676.5px">陕西省西...</div>
<div class="a" style="left:906px;top:678px;width:36px;height:15px;filter:blur(0.7px)"><div class="a" style="left:0px;top:0px;width:9px;height:8px;background:#eaeaea"></div><div class="a" style="left:9px;top:0px;width:9px;height:8px;background:#b4b4b4"></div><div class="a" style="left:18px;top:0px;width:9px;height:8px;background:#d0d0d0"></div><div class="a" style="left:27px;top:0px;width:9px;height:8px;background:#b0b0b0"></div><div class="a" style="left:0px;top:8px;width:9px;height:7px;background:#ececec"></div><div class="a" style="left:9px;top:8px;width:9px;height:7px;background:#e6e6e6"></div><div class="a" style="left:18px;top:8px;width:9px;height:7px;background:#e8e8e8"></div><div class="a" style="left:27px;top:8px;width:9px;height:7px;background:#e0e0e0"></div></div>
<div class="t td" style="left:1021px;top:676.5px">电脑</div>
<div class="t td" style="left:1169px;top:676px;letter-spacing:0.7px">1739256...</div>
<div class="thumb" style="left:1335px;top:674px;background:linear-gradient(180deg,#1c2c34 0,#2a4048 40%,#6a8088 55%,#1c2c34 70%,#1a2a30 100%)"></div>
<svg style="left:1430px;top:654px" width="60" height="61" viewBox="0 0 60 61"><path d="M11.4 26.9 L36.7 18 M11.4 26.9 L41 37.4" fill="none" stroke="#8a8a8a" stroke-width="0.9" opacity=".75"/><path d="M28 31 L33 33 L27 36 L34 38 L26 43.5" fill="none" stroke="#555" stroke-width="1.1" opacity=".8"/></svg>
<div class="t td" style="left:1546px;top:676.5px">设备</div>
<div class="del" style="left:1671px;top:668px"></div>
<svg style="left:1685px;top:678px" width="13" height="11" viewBox="0 0 13 11"><path d="M0.5 2 H12.5 M4.5 2 V0.8 H8.5 V2 M2 3.3 V10.5 H11 V3.3 M4.5 4.5 V9.5 M6.5 4.5 V9.5 M8.5 4.5 V9.5" fill="none" stroke="#e06060" stroke-width="1.2"/></svg>
<div class="t delt" style="left:1704px;top:678px">删除</div>
<div class="t det" style="left:1763px;top:678px">详情</div>
<div class="cb" style="left:272px;top:676px"></div>
<div class="hl" style="left:312px;top:715px;width:1518px"></div>
<div class="t td" style="left:331px;top:740.0px">二期办公室</div>
<div class="t code" style="left:331px;top:757.5px">J68P93LTI</div>
<div class="t td bad" style="left:479px;top:744.0px">异常</div>
<div class="t td" style="left:583px;top:743.5px;letter-spacing:0.75px">2024-11-22 17:48:57</div>
<div class="t td" style="left:787px;top:744.0px">陕西省西...</div>
<div class="a" style="left:906px;top:745px;width:36px;height:15px;filter:blur(0.7px)"><div class="a" style="left:9px;top:0px;width:9px;height:8px;background:#e0e0e0"></div><div class="a" style="left:18px;top:0px;width:9px;height:8px;background:#cccccc"></div><div class="a" style="left:27px;top:0px;width:9px;height:8px;background:#c0c0c0"></div><div class="a" style="left:0px;top:8px;width:9px;height:7px;background:#e4e4e4"></div><div class="a" style="left:9px;top:8px;width:9px;height:7px;background:#e4e4e4"></div><div class="a" style="left:18px;top:8px;width:9px;height:7px;background:#dcdcdc"></div><div class="a" style="left:27px;top:8px;width:9px;height:7px;background:#b8b8b8"></div></div>
<div class="t td" style="left:1021px;top:744.0px">北门区域东向</div>
<div class="t td" style="left:1169px;top:744px;letter-spacing:0.7px">1739256...</div>
<div class="thumb" style="left:1305px;top:729px;background:linear-gradient(90deg,#4a7a90,#8ac8d8 25%,#9ad0e0 60%,#3a6a80 80%,#a8d8e0)"></div>
<div class="thumb" style="left:1335px;top:729px;background:linear-gradient(90deg,#b04010,#d06020 40%,#e08040 50%,#b84818)"></div>
<div class="thumb" style="left:1365px;top:729px;background:linear-gradient(90deg,#505860,#a89080 30%,#c8a890 50%,#b0b0b0 75%,#303030)"></div>
<div class="thumb" style="left:1320px;top:753px;background:linear-gradient(90deg,#6a6a6a,#a07050 40%,#7a5a48 60%,#c0c0c0)"></div>
<div class="thumb" style="left:1350px;top:753px;background:linear-gradient(90deg,#2a3a3a,#506060 30%,#1a2a2a 60%,#405050)"></div>
<svg style="left:1430px;top:715px" width="60" height="74" viewBox="0 0 60 74"><path d="M19 36 L20 31 M23 35 L24 30 M28 34 L29 30 M20 42 C24 41 28 42 33 43 M23 47 L26 47" fill="none" stroke="#666" stroke-width="1.1" opacity=".6"/></svg>
<div class="t td" style="left:1546px;top:744.0px">区域</div>
<div class="del" style="left:1671px;top:736px"></div>
<svg style="left:1685px;top:746px" width="13" height="11" viewBox="0 0 13 11"><path d="M0.5 2 H12.5 M4.5 2 V0.8 H8.5 V2 M2 3.3 V10.5 H11 V3.3 M4.5 4.5 V9.5 M6.5 4.5 V9.5 M8.5 4.5 V9.5" fill="none" stroke="#e06060" stroke-width="1.2"/></svg>
<div class="t delt" style="left:1704px;top:745px">删除</div>
<div class="t det" style="left:1763px;top:745px">详情</div>
<div class="cb" style="left:272px;top:743px"></div>
<div class="t td" style="left:331px;top:813.5px">二期办公室</div>
<div class="t code" style="left:331px;top:831.0px">J68P93LTI</div>
<div class="t td ok" style="left:479px;top:817.5px">正常</div>
<div class="t td" style="left:583px;top:817.0px;letter-spacing:0.75px">2024-11-22 17:47:24</div>
<div class="t td" style="left:787px;top:817.5px">陕西省西...</div>
<div class="a" style="left:906px;top:818px;width:36px;height:15px;filter:blur(0.7px)"><div class="a" style="left:9px;top:0px;width:9px;height:8px;background:#e0e0e0"></div><div class="a" style="left:18px;top:0px;width:9px;height:8px;background:#d0d0d0"></div><div class="a" style="left:27px;top:0px;width:9px;height:8px;background:#c4c4c4"></div><div class="a" style="left:0px;top:8px;width:9px;height:7px;background:#999"></div><div class="a" style="left:9px;top:8px;width:9px;height:7px;background:#e8e8e8"></div><div class="a" style="left:18px;top:8px;width:9px;height:7px;background:#dcdcdc"></div><div class="a" style="left:27px;top:8px;width:9px;height:7px;background:#a8a8a8"></div></div>
<div class="t td" style="left:1021px;top:817.5px">北门区域东向</div>
<div class="t td" style="left:1169px;top:818px;letter-spacing:0.7px">1739256...</div>
<div class="thumb" style="left:1305px;top:802px;background:linear-gradient(90deg,#606060,#b09060 35%,#806030 60%,#c0c0c0 80%,#909090)"></div>
<div class="thumb" style="left:1335px;top:802px;background:linear-gradient(90deg,#808890,#c09870 40%,#305050 65%,#a0a8a8)"></div>
<div class="thumb" style="left:1365px;top:802px;background:linear-gradient(90deg,#304848,#5a8a88 40%,#c06040 70%,#407070)"></div>
<div class="thumb" style="left:1320px;top:826px;background:linear-gradient(90deg,#909090,#c0a090 35%,#806858 65%,#b0b0b0)"></div>
<div class="thumb" style="left:1350px;top:826px;background:linear-gradient(90deg,#203048,#6080a0 40%,#b0b8c0 60%,#304058)"></div>
<svg style="left:1430px;top:789px" width="60" height="73" viewBox="0 0 60 73"><path d="M16 33 C22 32 30 32 37 32 M22 36 L26 36 M24 43 L26 43" fill="none" stroke="#666" stroke-width="1" opacity=".55"/></svg>
<div class="t td" style="left:1546px;top:817.5px">区域</div>
<div class="del" style="left:1671px;top:810px"></div>
<svg style="left:1685px;top:820px" width="13" height="11" viewBox="0 0 13 11"><path d="M0.5 2 H12.5 M4.5 2 V0.8 H8.5 V2 M2 3.3 V10.5 H11 V3.3 M4.5 4.5 V9.5 M6.5 4.5 V9.5 M8.5 4.5 V9.5" fill="none" stroke="#e06060" stroke-width="1.2"/></svg>
<div class="t delt" style="left:1704px;top:818px">删除</div>
<div class="t det" style="left:1763px;top:818px">详情</div>
<div class="cb" style="left:272px;top:816px"></div>
<div class="hl" style="left:312px;top:862px;width:1518px"></div>
<div class="t td" style="left:331px;top:886.5px">充压机</div>
<div class="t code" style="left:331px;top:904.0px">VN9U0YJ0T259</div>
<div class="t td ok" style="left:479px;top:890.5px">正常</div>
<div class="t td" style="left:583px;top:890.0px;letter-spacing:0.75px">2024-11-22 17:32:50</div>
<div class="t td" style="left:787px;top:890.5px">陕西省西...</div>
<div class="a" style="left:906px;top:892px;width:36px;height:15px;filter:blur(0.7px)"><div class="a" style="left:0px;top:0px;width:9px;height:8px;background:#e8e8e8"></div><div class="a" style="left:9px;top:0px;width:9px;height:8px;background:#dcdcdc"></div><div class="a" style="left:18px;top:0px;width:9px;height:8px;background:#c0c0c0"></div><div class="a" style="left:27px;top:0px;width:9px;height:8px;background:#c8c8c8"></div><div class="a" style="left:0px;top:8px;width:9px;height:7px;background:#e0e0e0"></div><div class="a" style="left:9px;top:8px;width:9px;height:7px;background:#e4e4e4"></div><div class="a" style="left:18px;top:8px;width:9px;height:7px;background:#d8d8d8"></div><div class="a" style="left:27px;top:8px;width:9px;height:7px;background:#c4c4c4"></div></div>
<div class="t td" style="left:1021px;top:890.5px">机械设备</div>
<div class="t td" style="left:1169px;top:890px;letter-spacing:0.7px">1739256...</div>
<div class="thumb" style="left:1305px;top:876px;background:linear-gradient(90deg,#505860,#b09070 35%,#305858 65%,#a0a0a0)"></div>
<div class="thumb" style="left:1335px;top:876px;background:linear-gradient(90deg,#707070,#a08040 40%,#705020 60%,#b0b0b0)"></div>
<div class="thumb" style="left:1365px;top:876px;background:linear-gradient(90deg,#a09090,#c0a8a0 40%,#706060 70%,#c0c0c0)"></div>
<div class="thumb" style="left:1320px;top:900px;background:linear-gradient(90deg,#306060,#60a0a0 40%,#c06040 60%,#406868)"></div>
<div class="thumb" style="left:1350px;top:900px;background:linear-gradient(90deg,#204880,#3080b0 40%,#70c0d8 70%,#4090b8)"></div>
<svg style="left:1430px;top:862px" width="60" height="73" viewBox="0 0 60 73"><path d="M20 36 C26 35 31 35 37 36 M24 39 L27 39 M18 45 C22 44 27 45 32 45 M23 48 L25 48" fill="none" stroke="#666" stroke-width="1" opacity=".55"/></svg>
<div class="t td" style="left:1546px;top:890.5px">设备</div>
<div class="del" style="left:1671px;top:882px"></div>
<svg style="left:1685px;top:892px" width="13" height="11" viewBox="0 0 13 11"><path d="M0.5 2 H12.5 M4.5 2 V0.8 H8.5 V2 M2 3.3 V10.5 H11 V3.3 M4.5 4.5 V9.5 M6.5 4.5 V9.5 M8.5 4.5 V9.5" fill="none" stroke="#e06060" stroke-width="1.2"/></svg>
<div class="t delt" style="left:1704px;top:892px">删除</div>
<div class="t det" style="left:1763px;top:892px">详情</div>
<div class="cb" style="left:272px;top:890px"></div>
<div class="hl" style="left:312px;top:935px;width:1518px"></div>
<div class="t td" style="left:331px;top:953.5px">生活水泵房</div>
<div class="t code" style="left:331px;top:971.0px">XXXXXXXX</div>
<div class="t td ok" style="left:479px;top:957.5px">正常</div>
<div class="t td" style="left:583px;top:957.0px;letter-spacing:0.75px">2024-11-14 14:31:55</div>
<div class="t td" style="left:787px;top:957.5px">陕西省西...</div>
<div class="a" style="left:906px;top:958px;width:36px;height:15px;filter:blur(0.7px)"><div class="a" style="left:0px;top:0px;width:9px;height:8px;background:#e8e8e8"></div><div class="a" style="left:9px;top:0px;width:9px;height:8px;background:#c0c0c0"></div><div class="a" style="left:18px;top:0px;width:9px;height:8px;background:#c8c8c8"></div><div class="a" style="left:27px;top:0px;width:9px;height:8px;background:#b8b8b8"></div><div class="a" style="left:0px;top:8px;width:9px;height:7px;background:#e0e0e0"></div><div class="a" style="left:9px;top:8px;width:9px;height:7px;background:#d0d0d0"></div><div class="a" style="left:18px;top:8px;width:9px;height:7px;background:#d0d0d0"></div><div class="a" style="left:27px;top:8px;width:9px;height:7px;background:#c8c8c8"></div></div>
<div class="t td" style="left:1021px;top:957.5px">设备机房</div>
<div class="t td" style="left:1169px;top:958px;letter-spacing:0.7px">1839121...</div>
<div class="a" style="left:1297px;top:966px;width:4px;height:1px;background:#bbb"></div>
<div class="t td" style="left:1441px;top:957.5px">空</div>
<div class="t td" style="left:1546px;top:957.5px">区域</div>
<div class="del" style="left:1671px;top:950px"></div>
<svg style="left:1685px;top:960px" width="13" height="11" viewBox="0 0 13 11"><path d="M0.5 2 H12.5 M4.5 2 V0.8 H8.5 V2 M2 3.3 V10.5 H11 V3.3 M4.5 4.5 V9.5 M6.5 4.5 V9.5 M8.5 4.5 V9.5" fill="none" stroke="#e06060" stroke-width="1.2"/></svg>
<div class="t delt" style="left:1704px;top:958px">删除</div>
<div class="t det" style="left:1763px;top:958px">详情</div>
<div class="cb" style="left:272px;top:957px"></div>
<div class="hl" style="left:254px;top:471px;width:58px"></div>
<div class="hl" style="left:254px;top:532px;width:58px"></div>
<div class="hl" style="left:254px;top:593px;width:58px"></div>
<div class="hl" style="left:254px;top:655px;width:58px"></div>
<div class="hl" style="left:254px;top:717px;width:58px"></div>
<div class="hl" style="left:254px;top:790px;width:58px"></div>
<div class="hl" style="left:254px;top:864px;width:58px"></div>
<div class="hl" style="left:254px;top:937px;width:58px"></div>
<div class="cb" style="left:272px;top:371px"></div>
<div class="vl" style="left:253px;top:352px;height:620px"></div>
<div class="vl" style="left:312px;top:352px;height:620px"></div>
<div class="vl" style="left:460px;top:352px;height:620px"></div>
<div class="vl" style="left:565px;top:352px;height:620px"></div>
<div class="vl" style="left:768px;top:352px;height:620px"></div>
<div class="vl" style="left:1002px;top:352px;height:620px"></div>
<div class="vl" style="left:1150px;top:352px;height:620px"></div>
<div class="vl" style="left:1276px;top:352px;height:620px"></div>
<div class="vl" style="left:1422px;top:352px;height:620px"></div>
<div class="vl" style="left:1527px;top:352px;height:620px"></div>
<div class="vl" style="left:1652px;top:352px;height:620px"></div>
<div class="vl" style="left:1830px;top:352px;height:620px"></div>
<div class="a" style="left:313px;top:352px;width:6px;height:620px;background:linear-gradient(90deg,rgba(0,0,0,.05),rgba(0,0,0,0))"></div>
</body></html>
